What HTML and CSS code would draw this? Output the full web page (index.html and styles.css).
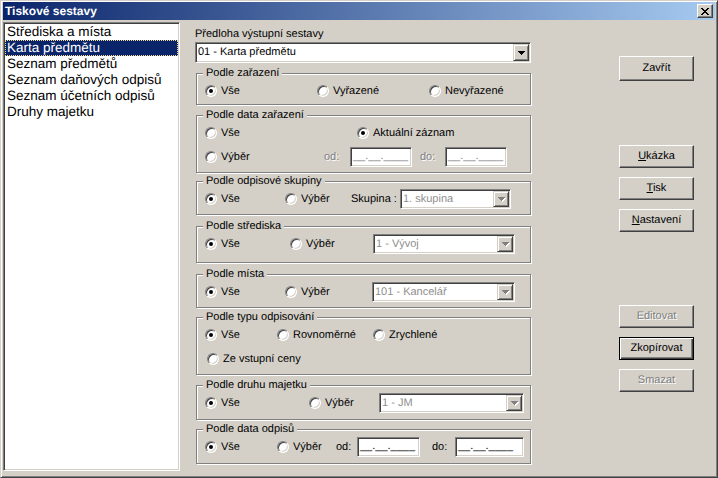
FILE: index.html
```html
<!DOCTYPE html>
<html lang="cs">
<head>
<meta charset="utf-8">
<title>Tiskové sestavy</title>
<link rel="stylesheet" href="styles.css">
</head>
<body>
<div class="window">
  <div class="titlebar">
    <span class="title">Tiskové sestavy</span>
    <span class="close"><svg width="8" height="7" viewBox="0 0 8 7"><path d="M0 0h2v1h-2zM6 0h2v1h-2zM1 1h2v1h-2zM5 1h2v1h-2zM2 2h4v1h-4zM3 3h2v1h-2zM2 4h4v1h-4zM1 5h2v1h-2zM5 5h2v1h-2zM0 6h2v1h-2zM6 6h2v1h-2z"/></svg></span>
  </div>
  <div class="client">
    <ul class="list">
      <li>Střediska a místa</li>
      <li class="sel">Karta předmětu</li>
      <li>Seznam předmětů</li>
      <li>Seznam daňových odpisů</li>
      <li>Seznam účetních odpisů</li>
      <li>Druhy majetku</li>
    </ul>

    <div class="middle">
      <div class="caption">Předloha výstupní sestavy</div>
      <div class="combo main">
        <span class="val">01 - Karta předmětu</span>
        <span class="drop"><svg width="7" height="4" viewBox="0 0 7 4"><path d="M0 0h7v1h-7zM1 1h5v1h-5zM2 2h3v1h-3zM3 3h1v1h-1z"/></svg></span>
      </div>

      <fieldset class="group g1">
        <legend>Podle zařazení</legend>
        <div class="row">
          <label class="opt"><span class="radio on"></span>Vše</label>
          <label class="opt"><span class="radio"></span>Vyřazené</label>
          <label class="opt"><span class="radio"></span>Nevyřazené</label>
        </div>
      </fieldset>

      <fieldset class="group g2">
        <legend>Podle data zařazení</legend>
        <div class="row r1">
          <label class="opt"><span class="radio"></span>Vše</label>
          <label class="opt"><span class="radio on"></span>Aktuální záznam</label>
        </div>
        <div class="row r2">
          <label class="opt"><span class="radio"></span>Výběr</label>
          <span class="dis">od:</span>
          <span class="date off">__.__.____</span>
          <span class="dis">do:</span>
          <span class="date off">__.__.____</span>
        </div>
      </fieldset>

      <fieldset class="group g3">
        <legend>Podle odpisové skupiny</legend>
        <div class="row">
          <label class="opt"><span class="radio on"></span>Vše</label>
          <label class="opt"><span class="radio"></span>Výběr</label>
          <span>Skupina :</span>
          <div class="combo off">
            <span class="val">1. skupina</span>
            <span class="drop"><svg width="8" height="5" viewBox="0 0 8 5"><path fill="#fff" d="M1 1h7v1h-7zM2 2h5v1h-5zM3 3h3v1h-3zM4 4h1v1h-1z"/><path fill="#808080" d="M0 0h7v1h-7zM1 1h5v1h-5zM2 2h3v1h-3zM3 3h1v1h-1z"/></svg></span>
          </div>
        </div>
      </fieldset>

      <fieldset class="group g4">
        <legend>Podle střediska</legend>
        <div class="row">
          <label class="opt"><span class="radio on"></span>Vše</label>
          <label class="opt"><span class="radio"></span>Výběr</label>
          <div class="combo off">
            <span class="val">1 - Vývoj</span>
            <span class="drop"><svg width="8" height="5" viewBox="0 0 8 5"><path fill="#fff" d="M1 1h7v1h-7zM2 2h5v1h-5zM3 3h3v1h-3zM4 4h1v1h-1z"/><path fill="#808080" d="M0 0h7v1h-7zM1 1h5v1h-5zM2 2h3v1h-3zM3 3h1v1h-1z"/></svg></span>
          </div>
        </div>
      </fieldset>

      <fieldset class="group g5">
        <legend>Podle místa</legend>
        <div class="row">
          <label class="opt"><span class="radio on"></span>Vše</label>
          <label class="opt"><span class="radio"></span>Výběr</label>
          <div class="combo off">
            <span class="val">101 - Kancelář</span>
            <span class="drop"><svg width="8" height="5" viewBox="0 0 8 5"><path fill="#fff" d="M1 1h7v1h-7zM2 2h5v1h-5zM3 3h3v1h-3zM4 4h1v1h-1z"/><path fill="#808080" d="M0 0h7v1h-7zM1 1h5v1h-5zM2 2h3v1h-3zM3 3h1v1h-1z"/></svg></span>
          </div>
        </div>
      </fieldset>

      <fieldset class="group g6">
        <legend>Podle typu odpisování</legend>
        <div class="row r1">
          <label class="opt"><span class="radio on"></span>Vše</label>
          <label class="opt"><span class="radio"></span>Rovnoměrné</label>
          <label class="opt"><span class="radio"></span>Zrychlené</label>
        </div>
        <div class="row r2">
          <label class="opt"><span class="radio"></span>Ze vstupní ceny</label>
        </div>
      </fieldset>

      <fieldset class="group g7">
        <legend>Podle druhu majetku</legend>
        <div class="row">
          <label class="opt"><span class="radio on"></span>Vše</label>
          <label class="opt"><span class="radio"></span>Výběr</label>
          <div class="combo off">
            <span class="val">1 - JM</span>
            <span class="drop"><svg width="8" height="5" viewBox="0 0 8 5"><path fill="#fff" d="M1 1h7v1h-7zM2 2h5v1h-5zM3 3h3v1h-3zM4 4h1v1h-1z"/><path fill="#808080" d="M0 0h7v1h-7zM1 1h5v1h-5zM2 2h3v1h-3zM3 3h1v1h-1z"/></svg></span>
          </div>
        </div>
      </fieldset>

      <fieldset class="group g8">
        <legend>Podle data odpisů</legend>
        <div class="row">
          <label class="opt"><span class="radio on"></span>Vše</label>
          <label class="opt"><span class="radio"></span>Výběr</label>
          <span>od:</span>
          <span class="date d1">__.__.____</span>
          <span>do:</span>
          <span class="date d2">__.__.____</span>
        </div>
      </fieldset>
    </div>

    <div class="buttons">
      <div class="btn close-btn">Zavřít</div>
      <div class="btn b-preview"><span><u>U</u>kázka</span></div>
      <div class="btn"><span><u>T</u>isk</span></div>
      <div class="btn"><span><u>N</u>astavení</span></div>
      <div class="btn disabled b-edit">Editovat</div>
      <div class="btn default">Zkopírovat</div>
      <div class="btn disabled">Smazat</div>
    </div>
  </div>
</div>
</body>
</html>
```

FILE: styles.css
```css
* { box-sizing: border-box; }

html, body {
  margin: 0;
  padding: 0;
}

body {
  width: 718px;
  height: 478px;
  overflow: hidden;
  background: #d4d0c8;
  font-family: "Liberation Sans", Arial, sans-serif;
  font-size: 11px;
  font-weight: normal;
  color: #000;
  text-rendering: geometricPrecision;
}

.window {
  width: 718px;
  height: 478px;
  background: #d4d0c8;
  border: 1px solid;
  border-color: #d4d0c8 #404040 #404040 #d4d0c8;
  box-shadow: inset 1px 1px 0 #fff, inset -1px -1px 0 #808080;
  padding: 1px 2px 0 2px;
  display: flex;
  flex-direction: column;
}

/* title bar */
.titlebar {
  height: 18px;
  flex: none;
  background: linear-gradient(to right, #0a246a, #a6caf0);
  display: flex;
  align-items: center;
  justify-content: space-between;
  padding: 0 2px;
}

.title {
  color: #fff;
  font-weight: bold;
  font-size: 12px;
  line-height: 14px;
}

.close {
  width: 16px;
  height: 14px;
  background: #d4d0c8;
  border: 1px solid;
  border-color: #fff #404040 #404040 #fff;
  box-shadow: inset -1px -1px 0 #808080;
  display: flex;
  align-items: center;
  justify-content: center;
  padding-right: 1px;
}

.close svg { display: block; fill: #000; }

/* client */
.client {
  flex: 1;
  display: flex;
  padding-top: 2px;
}

.list {
  margin: 0;
  padding: 1px;
  list-style: none;
  width: 177px;
  height: 449px;
  flex: none;
  background: #fff;
  border: 1px solid;
  border-color: #808080 #fff #fff #808080;
  box-shadow: inset 1px 1px 0 #404040, inset -1px -1px 0 #d4d0c8;
  font-size: 13.5px;
}

.list li {
  height: 16px;
  line-height: 16px;
  padding-left: 2px;
  white-space: nowrap;
}

.list li.sel {
  background: #0a246a;
  color: #fff;
  outline: 1px dotted #f5db95;
  outline-offset: -1px;
}

/* middle column */
.middle {
  width: 337px;
  flex: none;
  margin-left: 15px;
  padding-top: 6px;
}

.caption {
  height: 13px;
  line-height: 13px;
}

.combo {
  display: flex;
  height: 20px;
  background: #fff;
  border: 1px solid;
  border-color: #808080 #fff #fff #808080;
  box-shadow: inset 1px 1px 0 #404040, inset -1px -1px 0 #d4d0c8;
  padding: 1px;
}

.combo .val {
  flex: 1;
  padding-left: 1px;
  line-height: 16px;
  white-space: nowrap;
  overflow: hidden;
}

.combo .drop {
  width: 16px;
  flex: none;
  background: #d4d0c8;
  border: 1px solid;
  border-color: #d4d0c8 #404040 #404040 #d4d0c8;
  box-shadow: inset 1px 1px 0 #fff, inset -1px -1px 0 #808080;
  display: flex;
  align-items: center;
  justify-content: center;
}

.combo .drop svg { display: block; }

.combo.main {
  width: 336px;
  height: 21px;
  margin-top: 1px;
}

.combo.main .val { line-height: 17px; }
.combo.main .drop svg { fill: #000; margin-top: 1px; }

.combo.off .val { color: #8e8e8e; }
.combo.off .drop svg { margin-left: 1px; margin-top: 1px; }

/* group boxes */
.group {
  margin: 4px 0 0 1px;
  width: 335px;
  min-width: 0;
  border: 1px solid #808080;
  box-shadow: 1px 1px 0 #fff, inset 1px 1px 0 #fff;
  padding: 0 0 4px 8px;
}

.group legend {
  height: 13px;
  line-height: 13px;
  padding: 0 3px;
  margin-left: -2px;
  background: #d4d0c8;
  white-space: nowrap;
}

.row {
  display: grid;
  height: 22px;
  align-items: center;
  white-space: nowrap;
}

.row + .row { margin-top: 2px; }

.opt {
  display: flex;
  align-items: center;
  gap: 4px;
}

.radio {
  position: relative;
  flex: none;
  width: 12px;
  height: 12px;
  border-radius: 50%;
  background: #fff;
  border: 1px solid;
  border-color: #808080 #fff #fff #808080;
  box-shadow: inset 1px 1px 0 #404040, inset -1px -1px 0 #d4d0c8;
}

.radio.on::after {
  content: "";
  position: absolute;
  left: 3px;
  top: 3px;
  width: 4px;
  height: 4px;
  border-radius: 50%;
  background: #000;
}

.dis {
  color: #808080;
  text-shadow: 1px 1px 0 #fff;
}

.date {
  display: block;
  width: 62px;
  height: 20px;
  background: #fff;
  border: 1px solid;
  border-color: #808080 #fff #fff #808080;
  box-shadow: inset 1px 1px 0 #404040, inset -1px -1px 0 #d4d0c8;
  padding-left: 2px;
  line-height: 17px;
  overflow: hidden;
}

.date.off { color: #808080; }

/* per-group layout */
.g1 { margin-top: 4px; padding-bottom: 2px; }
.g1 .row { grid-template-columns: 112px 112px 1fr; }

.g2 { margin-top: 4px; }
.g2 .r1 { grid-template-columns: 152px 1fr; }
.g2 .r2 { grid-template-columns: 119px 26px 70px 25px 62px; }

.g3 { margin-top: 2px; }
.g3 .row { grid-template-columns: 80px 66px 49px 111px; }

.g4 { margin-top: 5px; padding-bottom: 7px; }
.g4 .row { grid-template-columns: 85px 83px 142px; }

.g5 { margin-top: 5px; }
.g5 .row { grid-template-columns: 80px 87px 143px; }

.g6 { margin-top: 3px; }
.g6 .r1 { grid-template-columns: 72px 96px 1fr; }
.g6 .r2 { grid-template-columns: 1fr; padding-left: 2px; }

.g7 { margin-top: 4px; padding-bottom: 5px; }
.g7 .row { grid-template-columns: 104px 70px 145px; }

.g8 { margin-top: 3px; padding-bottom: 5px; }
.g8 .row { grid-template-columns: 72px 59px 21px 75px 23px 69px; }
.g8 .d1 { width: 63px; }
.g8 .d2 { width: 69px; }

/* buttons column */
.buttons {
  width: 75px;
  flex: none;
  margin-left: 87px;
  display: flex;
  flex-direction: column;
}

.btn {
  width: 75px;
  height: 23px;
  margin-top: 9px;
  background: #d4d0c8;
  border: 1px solid;
  border-color: #fff #404040 #404040 #fff;
  box-shadow: inset -1px -1px 0 #808080;
  display: flex;
  align-items: center;
  justify-content: center;
  line-height: 13px;
}

.btn.close-btn { margin-top: 34px; height: 25px; }
.btn.b-preview { margin-top: 64px; }
.btn.b-edit { margin-top: 73px; }

.btn.disabled {
  color: #808080;
  text-shadow: 1px 1px 0 #fff;
}

.btn.default {
  border-color: #000;
  box-shadow: inset 1px 1px 0 #fff, inset -1px -1px 0 #404040, inset -2px -2px 0 #808080;
}

.btn u { text-decoration: underline; text-underline-offset: 1px; }
```
